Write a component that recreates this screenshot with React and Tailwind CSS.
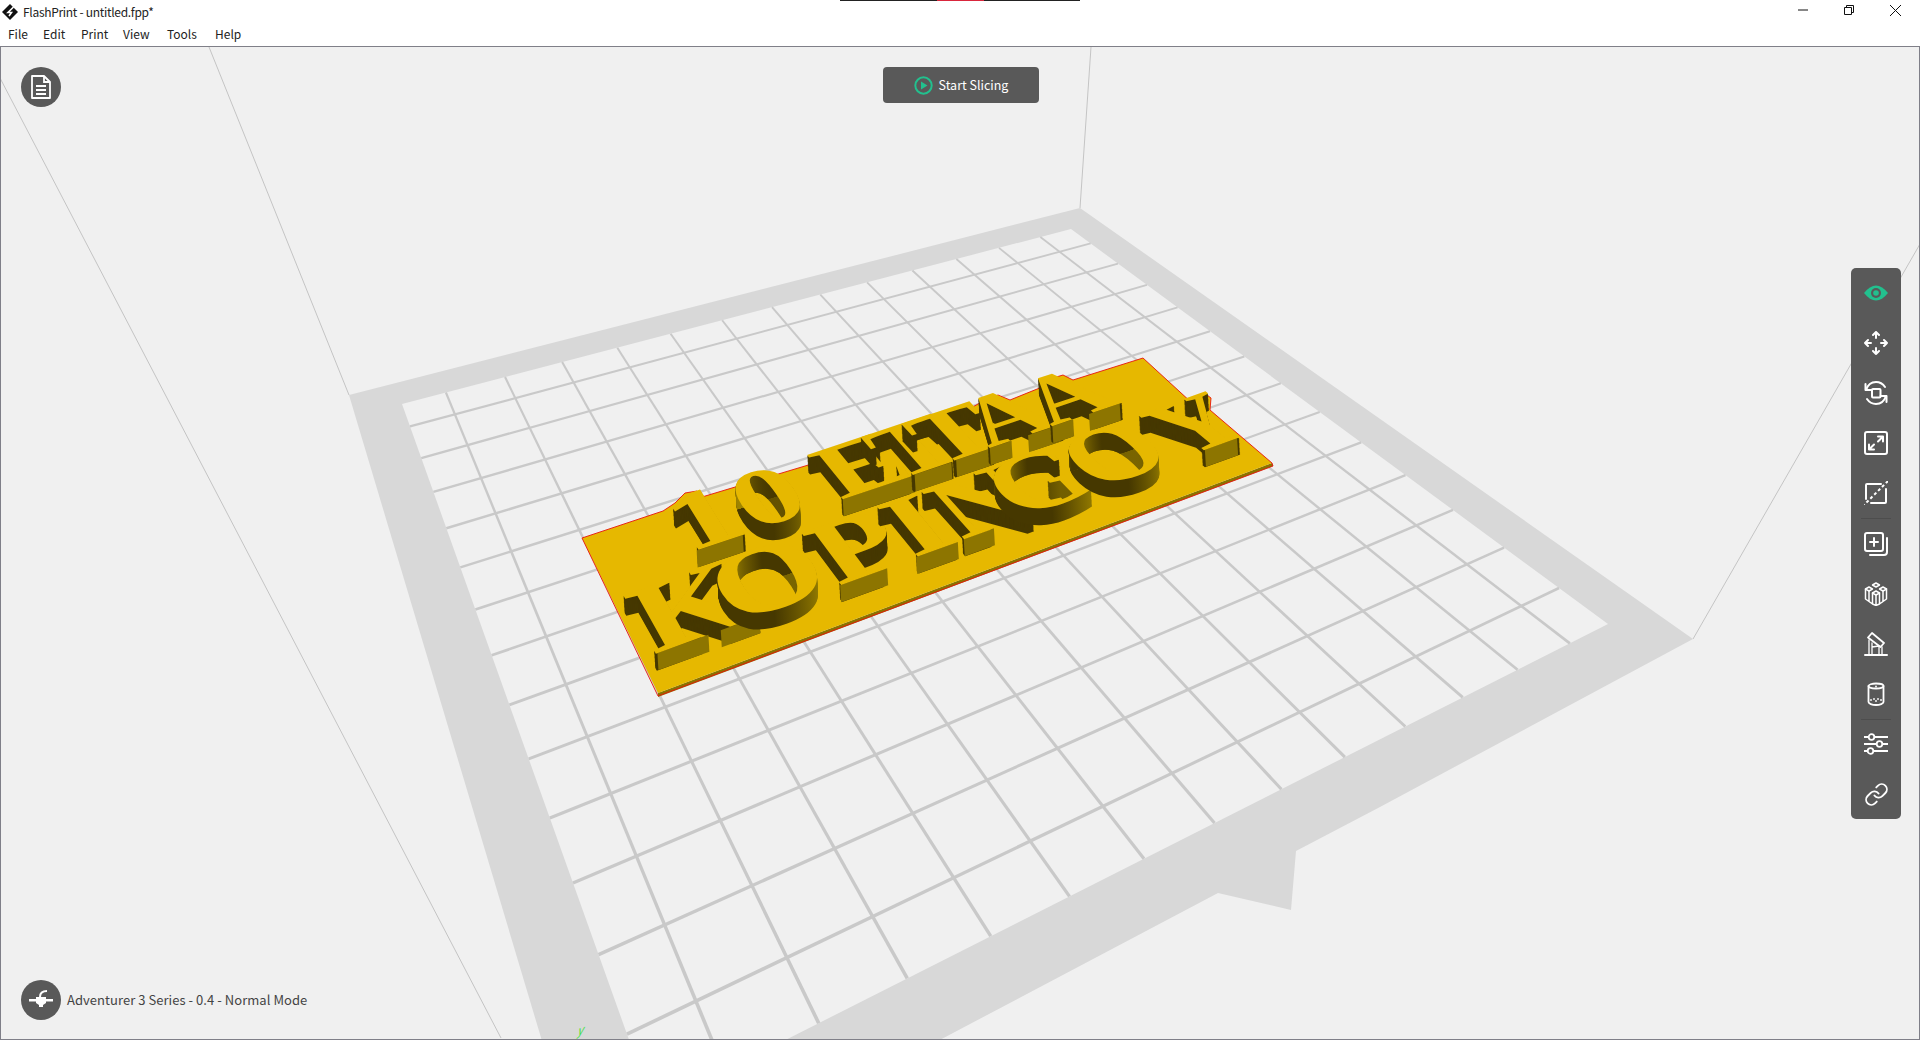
import { Link } from 'lucide-react';

const gray = '#595959';
const green = '#22c08e';

// unit square -> screen quad (0,0) (1,0) (1,1) (0,1)
function makeQuad(p) {
  const [[x0, y0], [x1, y1], [x2, y2], [x3, y3]] = p;
  const dx1 = x1 - x2;
  const dx2 = x3 - x2;
  const dy1 = y1 - y2;
  const dy2 = y3 - y2;
  const sx = x0 - x1 + x2 - x3;
  const sy = y0 - y1 + y2 - y3;
  const den = dx1 * dy2 - dx2 * dy1;
  const g = (sx * dy2 - dx2 * sy) / den;
  const h = (dx1 * sy - sx * dy1) / den;
  return {
    a: x1 - x0 + g * x1,
    b: x3 - x0 + h * x3,
    c: x0,
    d: y1 - y0 + g * y1,
    e: y3 - y0 + h * y3,
    f: y0,
    g,
    h,
  };
}

const project = (q, u, v) => {
  const w = q.g * u + q.h * v + 1;
  return [(q.a * u + q.b * v + q.c) / w, (q.d * u + q.e * v + q.f) / w];
};

const unproject = (q, x, y) => {
  const m00 = q.a - q.g * x;
  const m01 = q.b - q.h * x;
  const m10 = q.d - q.g * y;
  const m11 = q.e - q.h * y;
  const r0 = x - q.c;
  const r1 = y - q.f;
  const det = m00 * m11 - m01 * m10;
  return [(r0 * m11 - m01 * r1) / det, (m00 * r1 - m10 * r0) / det];
};

const pts = (list) => list.map((p) => p.join(',')).join(' ');

const bed = makeQuad([
  [402, 404],
  [1071, 229],
  [1608, 624],
  [653, 1107],
]);
const plate = makeQuad([
  [582, 538],
  [1143, 358],
  [1272, 463],
  [658, 693],
]);

const lineWidth = (y) => 1.7 + ((y - 200) / 840) * 2;

function gridBar(a, b) {
  const dx = b[0] - a[0];
  const dy = b[1] - a[1];
  const len = Math.hypot(dx, dy);
  const nx = -dy / len / 2;
  const ny = dx / len / 2;
  const wa = lineWidth(a[1]);
  const wb = lineWidth(b[1]);
  return pts([
    [a[0] + nx * wa, a[1] + ny * wa],
    [b[0] + nx * wb, b[1] + ny * wb],
    [b[0] - nx * wb, b[1] - ny * wb],
    [a[0] - nx * wa, a[1] - ny * wa],
  ]);
}

const gridBars = [
  ...Array.from({ length: 13 }, (_, k) => {
    const u = (0.72 + k) / 13.48;
    return gridBar(project(bed, u, 0), project(bed, u, 1));
  }),
  ...Array.from({ length: 13 }, (_, k) => {
    const v = (0.75 + k) / 13.58;
    return gridBar(project(bed, 0, v), project(bed, 1, v));
  }),
];

// silhouette of the model, letters poke out along the far edge
const outline = [
  [582, 538], [663, 511], [675, 503], [685, 493], [697, 491], [702, 497],
  [815, 463], [814, 455], [870, 437], [879, 443], [881, 433], [953, 410],
  [957, 416], [985, 400], [998, 395], [1010, 400], [1052, 383], [1053, 378],
  [1063, 375], [1073, 380], [1143, 358], [1192, 403], [1207, 395], [1211, 398],
  [1210, 410], [1272, 463], [658, 693],
];

// feet: baseline stretches of each letter in em, measured from its centre
const rows = [
  {
    y: (x) => 568 - 0.349 * (x - 697),
    letters: [
      ['1', 721, [[-0.185, 0.18]]],
      ['0', 785, []],
      ['E', 880, [[-0.318, 0.308]]],
      ['T', 934, [[-0.167, 0.167]]],
      ['T', 975, [[-0.167, 0.167]]],
      ['A', 1027, [[-0.35, -0.14], [0.02, 0.33]]],
      ['A', 1088, [[-0.35, -0.14], [0.02, 0.33]]],
    ],
  },
  {
    y: (x) => 670 - 0.372 * (x - 660),
    letters: [
      ['K', 708, [[-0.36, 0.01], [0.1, 0.38]]],
      ['O', 786, []],
      ['P', 877, [[-0.29, 0.09]]],
      ['I', 938, [[-0.175, 0.175]]],
      ['N', 1004, [[-0.345, -0.08]]],
      ['G', 1062, []],
      ['O', 1138, []],
      ['Y', 1222, [[-0.165, 0.165]]],
    ],
  },
];

const emU = 0.195;
const emV = 0.55;
const rise = [1, 17];
const round = { 0: true, O: true, G: true };

function buildLetter(ch, cx, baseY, feet, id) {
  const ox = cx - rise[0];
  const oy = baseY - rise[1];
  const [u, v] = unproject(plate, ox, oy);
  const p = project(plate, u, v);
  const pu = project(plate, u + 0.001, v);
  const pv = project(plate, u, v + 0.001);
  const su = [((pu[0] - p[0]) / 0.001) * emU, ((pu[1] - p[1]) / 0.001) * emU];
  const sv = [((pv[0] - p[0]) / 0.001) * emV, ((pv[1] - p[1]) / 0.001) * emV];
  const walls = feet.map(([a, b]) =>
    pts([
      [ox + su[0] * a, oy + su[1] * a],
      [ox + su[0] * b, oy + su[1] * b],
      [ox + su[0] * b + rise[0], oy + su[1] * b + rise[1]],
      [ox + su[0] * a + rise[0], oy + su[1] * a + rise[1]],
    ]),
  );
  // upper half of the letter, where the wall of the counter shows
  const mx = ox - sv[0] * 0.3;
  const my = oy - sv[1] * 0.3;
  const upper = pts([
    [mx - su[0], my - su[1]],
    [mx + su[0], my + su[1]],
    [mx + su[0] - sv[0], my + su[1] - sv[1]],
    [mx - su[0] - sv[0], my - su[1] - sv[1]],
  ]);
  return {
    id,
    ch,
    matrix: `matrix(${su[0] / 100} ${su[1] / 100} ${sv[0] / 100} ${sv[1] / 100} ${ox} ${oy})`,
    walls,
    upper,
  };
}

const letters = rows.map((row, r) =>
  row.letters.map(([ch, cx, feet], i) => buildLetter(ch, cx, row.y(cx), feet, `glyph-${r}-${i}`)),
);

const steps = Array.from({ length: 17 }, (_, i) => 17 - i);

function Scene() {
  return (
    <svg
      className="absolute top-0 left-0"
      width="1918"
      height="992"
      viewBox="1 47 1918 992"
    >
      <defs>
        <linearGradient id="round-wall" gradientUnits="userSpaceOnUse" x1="-8" y1="0" x2="38" y2="0">
          <stop offset="0" stopColor="#463800" />
          <stop offset="1" stopColor="#a08600" />
        </linearGradient>
        <linearGradient id="counter-wall" gradientUnits="userSpaceOnUse" x1="-32" y1="0" x2="20" y2="0">
          <stop offset="0" stopColor="#463800" />
          <stop offset="0.2" stopColor="#a08600" />
          <stop offset="0.75" stopColor="#463800" />
          <stop offset="1" stopColor="#463800" />
        </linearGradient>
        {letters.flat().map((l) => (
          <text
            key={l.id}
            id={l.id}
            transform={l.matrix}
            fontSize="100"
            fontWeight="700"
            textAnchor="middle"
            fontFamily="'Liberation Serif', serif"
          >
            {l.ch}
          </text>
        ))}
        {letters.flat().map((l) =>
          round[l.ch] ? (
            <clipPath key={l.id} id={`${l.id}-upper`}>
              <polygon points={l.upper} />
            </clipPath>
          ) : null,
        )}
      </defs>

      {/* walls of the build volume */}
      <g stroke="#c4c4c4" strokeWidth="1" fill="none">
        <line x1="0" y1="78" x2="501" y2="1038" />
        <line x1="209" y1="47" x2="349" y2="395" />
        <line x1="1080" y1="208" x2="1091" y2="47" />
        <line x1="1693" y1="639" x2="1920" y2="244" />
      </g>

      {/* bed */}
      <polygon
        fill="#d8d8d8"
        points="349,395 1080,208 1693,639 1380,807 1296,851 1291,910 1218,893 900,1061 548,1061"
      />
      <polygon fill="#f0f0f0" points="402,404 1071,229 1608,624 653,1107" />
      {gridBars.map((b, i) => (
        <polygon key={i} points={b} fill="#c9c9c9" />
      ))}

      {/* model */}
      <polygon points="658,693 1272,463 1273,466 658,697" fill="#8a7300" />
      <polygon points={pts(outline)} fill="#e6b800" />
      <polyline points={pts(outline.slice(0, 26))} fill="none" stroke="#e8140c" strokeWidth="0.9" />
      <polyline points="582,538 658,696 1273,466 1272,463" fill="none" stroke="#e8140c" strokeWidth="0.9" />
      {letters.map((row, r) => (
        <g key={r}>
          {row.map((l) => (
            <g key={l.id}>
              {steps.map((n) => (
                <use
                  key={n}
                  href={`#${l.id}`}
                  transform={`translate(${(rise[0] * n) / 17} ${(rise[1] * n) / 17})`}
                  fill={round[l.ch] ? 'url(#round-wall)' : '#463800'}
                />
              ))}
              {round[l.ch] && (
                <g clipPath={`url(#${l.id}-upper)`}>
                  {steps.map((n) => (
                    <use
                      key={n}
                      href={`#${l.id}`}
                      transform={`translate(${(rise[0] * n) / 17} ${(rise[1] * n) / 17})`}
                      fill="url(#counter-wall)"
                    />
                  ))}
                </g>
              )}
              {l.walls.map((w, i) => (
                <polygon key={i} points={w} fill="#8d7500" />
              ))}
              <use href={`#${l.id}`} fill="#e6b800" />
            </g>
          ))}
        </g>
      ))}

      <text
        transform="matrix(0.9 -0.25 -0.35 1.1 577 1036)"
        fontSize="13"
        fill="#44e044"
        fontFamily="'Liberation Sans', sans-serif"
      >
        y
      </text>
    </svg>
  );
}

const icon = {
  fill: 'none',
  stroke: 'white',
  strokeWidth: 2,
  strokeLinecap: 'round',
  strokeLinejoin: 'round',
  width: 24,
  height: 24,
  viewBox: '0 0 24 24',
};

function EyeIcon() {
  return (
    <svg width="24" height="24" viewBox="0 0 24 24">
      <path d="M0 12C4 7 8 4.500 12 4.500S20 7 24 12c-4 5-8 7.500-12 7.500S4 17 0 12z" fill={green} />
      <circle cx="12" cy="12" r="5" fill={gray} />
      <circle cx="12" cy="12" r="2.800" fill={green} />
    </svg>
  );
}

function MoveIcon() {
  return (
    <svg {...icon}>
      <path d="M12 1v6M9 4l3-3 3 3M12 23v-6M9 20l3 3 3-3M1 12h6M4 9l-3 3 3 3M23 12h-6M20 9l3 3-3 3" />
    </svg>
  );
}

function RotateIcon() {
  return (
    <svg {...icon}>
      <rect x="8" y="8" width="8.500" height="8.500" rx="1" />
      <path d="M2 9c2-6 6-8 10-8 4 0 7 2 9 5" />
      <path d="M1.500 3v6h6" />
      <path d="M22 15c-2 6-6 8-10 8-4 0-7-2-9-5" />
      <path d="M22.500 21v-6h-6" />
    </svg>
  );
}

function ScaleIcon() {
  return (
    <svg {...icon}>
      <rect x="1" y="1" width="22" height="22" rx="2" />
      <path d="M14 5.500h5v5M19 5.500l-5 5M5 13.500v5h5M5 18.500l5-5" />
    </svg>
  );
}

function CutIcon() {
  return (
    <svg {...icon}>
      <path d="M2 18V4a1 1 0 0 1 1-1h14" />
      <path d="M22 8v13a1 1 0 0 1-1 1H7" />
      <path d="M24 0L0 24" strokeDasharray="3 2.500" strokeLinecap="butt" />
    </svg>
  );
}

function AddIcon() {
  return (
    <svg {...icon}>
      <rect x="1" y="1" width="18" height="18" rx="2" />
      <path d="M10 6v8M6 10h8M23 6v14a3 3 0 0 1-3 3H6" />
    </svg>
  );
}

function ColumnsIcon() {
  return (
    <svg {...icon} strokeWidth="1.500">
      <path d="M12 1l3.500 2-3.500 2-3.500-2zM5 5l3.500 2L5 9 1.500 7zM19 5l3.500 2L19 9l-3.500-2zM12 9l3.500 2-3.500 2-3.500-2z" />
      <path d="M1.500 7v10L8.500 22V11M22.500 7v10l-7 5V11M12 13v10M8.500 22l3.500 1.500 3.500-1.500M5 9v10M19 9v10" />
    </svg>
  );
}

function SupportIcon() {
  return (
    <svg {...icon}>
      <path d="M8 1l12 10-3.500 4L4 5.500z" strokeWidth="1.800" />
      <path d="M1 23h22" />
      <path d="M5 8v15M8 11v12M18 15v8M15 14v9M8 15l7-1" strokeWidth="1.300" />
    </svg>
  );
}

function CylinderIcon() {
  return (
    <svg {...icon} strokeWidth="1.800">
      <ellipse cx="12" cy="4" rx="7.500" ry="2.500" />
      <path d="M4.500 4v16c0 1.500 3.500 3 7.500 3s7.500-1.500 7.500-3V4" />
      <path d="M7 18h.01M10 17h.01M14 17h.01M17 18h.01M12 19h.01M12 4.500h.01" />
    </svg>
  );
}

function SlidersIcon() {
  return (
    <svg {...icon} strokeWidth="1.800">
      <path d="M0 5h24M0 12h24M0 19h24" />
      <circle cx="7.500" cy="5" r="2.800" fill={gray} />
      <circle cx="15.500" cy="12" r="2.800" fill={gray} />
      <circle cx="6.500" cy="19" r="2.800" fill={gray} />
    </svg>
  );
}

function LinkIcon() {
  return <Link size={25} color="white" strokeWidth={1.8} />;
}

const groupA = [EyeIcon, MoveIcon, RotateIcon, ScaleIcon, CutIcon];
const groupB = [AddIcon, ColumnsIcon, SupportIcon, CylinderIcon];

function ToolButton({ Icon }) {
  return (
    <button type="button" className="flex h-[50px] w-[50px] items-center justify-center">
      <Icon />
    </button>
  );
}

function Toolbar() {
  return (
    <div className="absolute top-[221px] right-[18px] flex w-[50px] flex-col items-center rounded-[5px] bg-[#595959]">
      {groupA.map((Icon, i) => (
        <ToolButton key={i} Icon={Icon} />
      ))}
      <div className="h-px w-[30px] bg-[#4d4d4d]" />
      {groupB.map((Icon, i) => (
        <ToolButton key={i} Icon={Icon} />
      ))}
      <div className="-mb-px h-px w-[30px] bg-[#4d4d4d]" />
      <ToolButton Icon={SlidersIcon} />
      <ToolButton Icon={LinkIcon} />
    </div>
  );
}

const menus = [
  ['File', 'w-[35px]'],
  ['Edit', 'w-[38px]'],
  ['Print', 'w-[42px]'],
  ['View', 'w-[44px]'],
  ['Tools', 'w-[48px]'],
  ['Help', 'w-[40px]'],
];

function TitleBar() {
  return (
    <header className="relative h-[47px] shrink-0 border-b border-[#7f7f88] bg-white text-[12px] text-[#222]">
      <div className="absolute top-0 left-[840px] flex h-px w-[240px] bg-[#222]">
        <div className="ml-[97px] w-[47px] bg-[#d9263c]" />
      </div>
      <div className="flex h-[24px] items-start justify-between pr-[2px]">
        <div className="mt-[3px] flex items-center">
          <svg className="ml-[2px] mr-[5px]" width="16" height="16" viewBox="0 0 16 16">
            <path d="M8 0l8 8-8 8-8-8z" fill="#111" />
            <path d="M11.500 3L6 8.500h3.500L7 12" fill="none" stroke="white" strokeWidth="1.600" />
          </svg>
          <span className="tracking-[-0.3px]">FlashPrint - untitled.fpp*</span>
        </div>
        <div className="flex">
          <button type="button" className="flex h-[20px] w-[46px] items-center justify-center">
            <svg width="10" height="10" viewBox="0 0 10 10">
              <path d="M0 5h10" stroke="#111" />
            </svg>
          </button>
          <button type="button" className="flex h-[20px] w-[46px] items-center justify-center">
            <svg width="10" height="10" viewBox="0 0 10 10" fill="none" stroke="#111">
              <path d="M.5 2.500h7v7h-7zM2.500 2.500v-2h7v7h-2" />
            </svg>
          </button>
          <button type="button" className="flex h-[20px] w-[46px] items-center justify-center">
            <svg width="11" height="11" viewBox="0 0 11 11" stroke="#111">
              <path d="M0 0l11 11M11 0L0 11" />
            </svg>
          </button>
        </div>
      </div>
      <nav className="flex h-[20px] items-center pl-[8px]">
        {menus.map(([label, width]) => (
          <span key={label} className={width}>
            {label}
          </span>
        ))}
      </nav>
    </header>
  );
}

export default function App() {
  return (
    <div className="flex h-[1040px] w-[1920px] flex-col overflow-hidden bg-white font-['Noto_Sans_CJK_SC','Noto_Sans',sans-serif]">
      <TitleBar />
      <main className="relative flex-1 overflow-hidden border-x border-b border-[#7f7f88] bg-[#f0f0f0]">
        <Scene />

        <button
          type="button"
          className="absolute top-[20px] left-[20px] flex h-[40px] w-[40px] items-center justify-center rounded-full bg-[#595959]"
        >
          <svg width="20" height="24" viewBox="0 0 20 24" fill="none" stroke="white" strokeWidth="1.800">
            <path d="M1 1h12l6 6v16H1z" strokeLinejoin="round" />
            <path d="M13 1v6h6" />
            <path d="M5 11h10M5 15h10M5 19h10" />
          </svg>
        </button>

        <button
          type="button"
          className="absolute top-[20px] left-[882px] flex h-[36px] w-[156px] items-center justify-center gap-[6px] rounded-[4px] bg-[#595959] text-[12.500px] text-white"
        >
          <svg width="19" height="19" viewBox="0 0 19 19">
            <circle cx="9.500" cy="9.500" r="8.200" fill="none" stroke={green} strokeWidth="2" />
            <path d="M7 5.500l6.500 4-6.500 4z" fill={green} />
          </svg>
          Start Slicing
        </button>

        <Toolbar />

        <div className="absolute bottom-[19px] left-[20px] flex items-center gap-[6px]">
          <button
            type="button"
            className="flex h-[40px] w-[40px] items-center justify-center rounded-full bg-[#595959]"
          >
            <svg width="24" height="20" viewBox="0 0 24 20" fill="white">
              <path d="M0 9h24v2.500H0z" />
              <path d="M7 7h10v6l-3 2v2h-4v-2l-3-2z" />
              <path d="M11 7C11 3 14 1 18 1" fill="none" stroke="white" strokeWidth="2" />
            </svg>
          </button>
          <span className="text-[13px] tracking-[0.05px] text-[#444]">
            Adventurer 3 Series - 0.4 - Normal Mode
          </span>
        </div>
      </main>
    </div>
  );
}
